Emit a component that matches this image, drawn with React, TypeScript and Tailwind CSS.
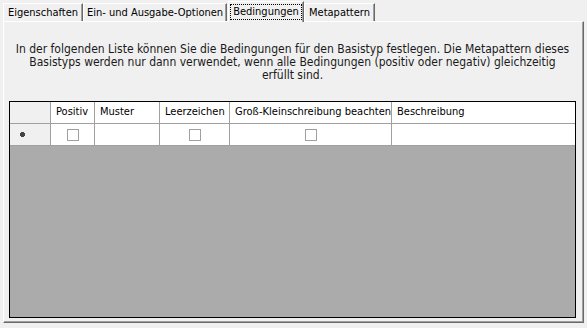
const font = { fontFamily: '"DejaVu Sans Condensed", "DejaVu Sans", sans-serif' };

function Tab({ label, w, selected }: { label: string; w: string; selected?: boolean }) {
  if (selected) {
    return (
      <div
        className={`${w} h-[21px] -mb-[1px] relative z-10 flex items-center justify-center bg-[#f0f0f0] border-t border-l border-white border-r border-r-[#696969] shadow-[inset_-1px_0_0_#a0a0a0]`}
      >
        <span className="px-[2px] leading-[14px] border border-dotted border-black">{label}</span>
      </div>
    );
  }
  return (
    <div
      className={`${w} h-[18px] flex items-center justify-center border-t border-l border-white border-r border-r-[#696969] shadow-[inset_-1px_0_0_#a0a0a0] pt-[1px]`}
    >
      {label}
    </div>
  );
}

function Check() {
  return <div className="w-[12px] h-[12px] bg-white border border-[#a0a0a0]" />;
}

const cols = [
  { label: "Positiv", w: "w-[44px]", check: true },
  { label: "Muster", w: "w-[65px]" },
  { label: "Leerzeichen", w: "w-[70px]", check: true },
  { label: "Groß-Kleinschreibung beachten", w: "w-[162px]", check: true },
  { label: "Beschreibung", w: "flex-1" },
];

export default function App() {
  return (
    <div
      className="w-[587px] h-[328px] bg-[#f0f0f0] text-[11px] text-black pl-[3px] pt-[1px] overflow-hidden"
      style={font}
    >
      <div className="flex items-end h-[20px]">
        <Tab label="Eigenschaften" w="w-[80px]" />
        <Tab label="Ein- und Ausgabe-Optionen" w="w-[144px]" />
        <div className="w-[1px]" />
        <Tab label="Bedingungen" w="w-[76px]" selected />
        <Tab label="Metapattern" w="w-[71px]" />
      </div>

      <div className="w-[581px] h-[302px] border-t border-l border-white border-r border-b border-r-[#696969] border-b-[#696969] shadow-[inset_-1px_-1px_0_#a0a0a0] flex flex-col pl-[5px] pr-[7px]">
        <div className="mt-[21px] h-[58px] text-center text-[12px] leading-[13px] text-[#1a1a1a] whitespace-nowrap">
          In der folgenden Liste können Sie die Bedingungen für den Basistyp festlegen. Die Metapattern dieses
          <br />
          Basistyps werden nur dann verwendet, wenn alle Bedingungen (positiv oder negativ) gleichzeitig
          <br />
          erfüllt sind.
        </div>

        <div className="h-[217px] border border-black bg-[#ababab] flex flex-col">
          <div className="flex h-[22px] bg-[#f0f0f0] border-b border-[#a0a0a0]">
            <div className="w-[41px] border-r border-[#a0a0a0]" />
            {cols.map((c) => (
              <div
                key={c.label}
                className={`${c.w} flex items-center pl-[5px] whitespace-nowrap overflow-hidden border-r border-[#a0a0a0] last:border-r-0 bg-white`}
              >
                {c.label}
              </div>
            ))}
          </div>
          <div className="flex h-[22px] border-b border-[#a0a0a0]">
            <div className="w-[41px] bg-[#f0f0f0] border-r border-[#a0a0a0] flex items-center pl-[10px]">
              <svg width="5" height="5" viewBox="0 0 5 5">
                <rect x="0" y="1" width="5" height="3" fill="#444" />
                <rect x="1" y="0" width="3" height="5" fill="#444" />
              </svg>
            </div>
            {cols.map((c) => (
              <div
                key={c.label}
                className={`${c.w} bg-white flex items-center justify-center border-r border-[#a0a0a0] last:border-r-0`}
              >
                {c.check && <Check />}
              </div>
            ))}
          </div>
        </div>
      </div>
    </div>
  );
}
